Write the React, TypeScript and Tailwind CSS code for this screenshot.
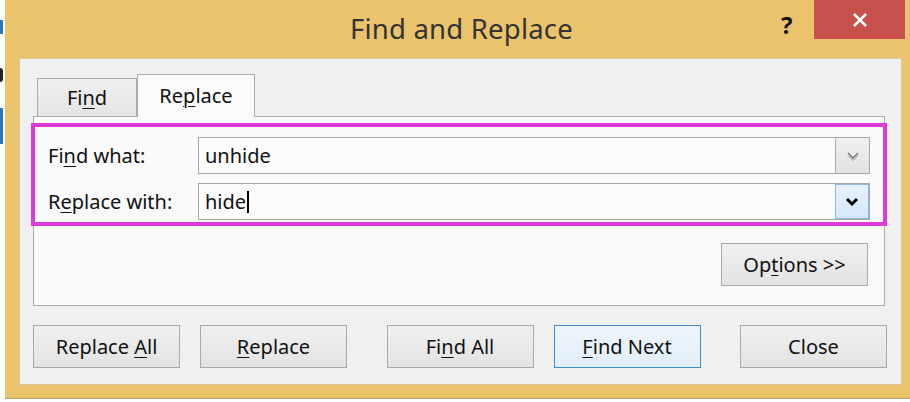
import React from 'react';

const U = ({ children }: { children: React.ReactNode }) => (
    <span className="underline decoration-1 underline-offset-[3px]">{children}</span>
);

const Chevron = ({ bold }: { bold?: boolean }) =>
    bold ? (
        <svg width="14" height="10" viewBox="0 0 14 10">
            <polyline points="2,2 7,7 12,2" fill="none" stroke="#000" strokeWidth="3" />
        </svg>
    ) : (
        <svg width="14" height="10" viewBox="0 0 14 10">
            <polyline points="2,2 7,7 12,2" fill="none" stroke="#6d6d6d" strokeWidth="1.3" />
            <polyline points="2,4.5 7,9.5 12,4.5" fill="none" stroke="#9a9a9a" strokeWidth="1" />
        </svg>
    );

const Combo = ({ value, active }: { value: string; active?: boolean }) => (
    <div className="flex h-[37px] flex-1 border border-[#a6a6a6] bg-[#fcfcfc]">
        <div className="flex flex-1 items-center pl-[6px] text-[20px] text-[#111]">
            {value}
            {active && <span className="ml-[1px] h-[22px] w-[1.5px] bg-black" />}
        </div>
        {active ? (
            <div className="flex w-[34px] items-center justify-center border border-[#8fb8e3] bg-gradient-to-b from-[#e6f1fc] to-[#d6e8f9]">
                <Chevron bold />
            </div>
        ) : (
            <div className="flex w-[34px] items-center justify-center border-l border-[#acacac] bg-gradient-to-b from-[#efefef] to-[#e3e3e3]">
                <Chevron />
            </div>
        )}
    </div>
);

const Btn = ({ children, primary, className = '' }: { children: React.ReactNode; primary?: boolean; className?: string }) => (
    <div
        className={
            'flex h-[43px] w-[147px] items-center justify-center border text-[20px] text-[#111] ' +
            (primary
                ? 'border-[#3f8ad0] bg-gradient-to-b from-[#eef5fc] to-[#e2eef9] '
                : 'border-[#a9a9a9] bg-gradient-to-b from-[#f0f0f0] to-[#e3e3e3] ') +
            className
        }
    >
        <span>{children}</span>
    </div>
);

export default function App() {
    return (
        <div className="flex h-[402px] w-[910px] overflow-hidden bg-white font-['Noto_Sans',sans-serif]">
            {/* background app sliver */}
            <div className="relative w-[5px] bg-white">
                <div className="absolute left-0 top-[20px] h-[14px] w-[3px] bg-[#2a7ab8]" />
                <div className="absolute left-0 top-[68px] h-[14px] w-[3px] rounded-r-full bg-[#222]" />
                <div className="absolute left-0 top-[108px] h-[36px] w-[3px] bg-[#2a7ab8]" />
            </div>

            <div className="flex h-[399px] flex-1 flex-col border-b border-[#b9a36a] bg-[#ebc36c]">
                {/* title bar */}
                <div className="relative flex h-[58px] items-center justify-center">
                    <span className="pl-[8px] text-[27.5px] tracking-[0.2px] text-[#333]">Find and Replace</span>
                    <span className="absolute left-[776px] top-[7px] text-[24px] font-bold text-[#111]">?</span>
                    <div className="absolute right-[5px] top-0 flex h-[39px] w-[91px] items-center justify-center bg-[#c8504d]">
                        <svg width="16" height="16" viewBox="0 0 16 16">
                            <path d="M2 2 L14 14 M14 2 L2 14" stroke="#fff" strokeWidth="2.6" />
                        </svg>
                    </div>
                </div>

                {/* client area */}
                <div className="mb-[13px] ml-[14px] mr-[8px] flex flex-1 flex-col border border-[#d8c9a0] bg-[#f0f0f0]">
                    {/* tabs */}
                    <div className="flex items-end pl-[17px] pt-[15px]">
                        <div className="flex h-[38px] w-[100px] items-center justify-center border border-b-0 border-[#acacac] bg-gradient-to-b from-[#f0f0f0] to-[#e4e4e4] text-[20px] text-[#111]">
                            <span>
                                Fi<U>n</U>d
                            </span>
                        </div>
                        <div className="relative -mb-px flex h-[43px] w-[118px] items-center justify-center border border-b-0 border-[#acacac] bg-[#fbfbfb] text-[20px] text-[#111]">
                            <span>
                                Re<U>p</U>lace
                            </span>
                        </div>
                    </div>

                    {/* tab panel */}
                    <div className="ml-[13px] mr-[16px] flex flex-col border border-[#acacac] bg-[#fafafa] pb-[19px]">
                        <div className="-mx-[3px] mt-[6px] flex flex-col gap-[9px] border-[4px] border-[#dc3ad9] pb-[2px] pl-[13px] pr-[13px] pt-[10px]">
                            <div className="flex items-center">
                                <span className="w-[150px] text-[20px] text-[#111]">
                                    Fi<U>n</U>d what:
                                </span>
                                <Combo value="unhide" />
                            </div>
                            <div className="flex items-center">
                                <span className="w-[150px] text-[20px] text-[#111]">
                                    R<U>e</U>place with:
                                </span>
                                <Combo value="hide" active />
                            </div>
                        </div>
                        <div className="mr-[16px] mt-[17px] flex justify-end">
                            <Btn className="h-[42px] w-[147px]">
                                Op<U>t</U>ions &gt;&gt;
                            </Btn>
                        </div>
                    </div>

                    {/* buttons */}
                    <div className="ml-[13px] mr-[14px] mt-[19px] flex justify-between">
                        <div className="flex gap-[20px]">
                            <Btn>
                                Replace <U>A</U>ll
                            </Btn>
                            <Btn>
                                <U>R</U>eplace
                            </Btn>
                        </div>
                        <div className="flex gap-[20px]">
                            <Btn>
                                Fi<U>n</U>d All
                            </Btn>
                            <Btn primary>
                                <U>F</U>ind Next
                            </Btn>
                        </div>
                        <Btn>Close</Btn>
                    </div>
                </div>
            </div>
        </div>
    );
}
